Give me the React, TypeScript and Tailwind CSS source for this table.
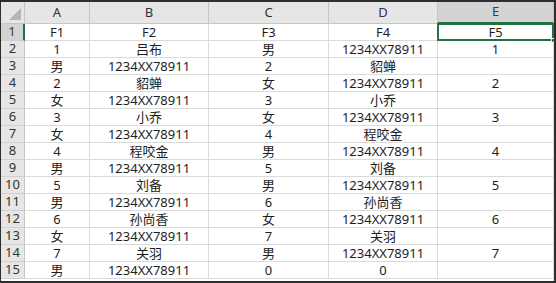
const COLS = ["A", "B", "C", "D", "E"];

const ROWS: string[][] = [
  ["F1", "F2", "F3", "F4", "F5"],
  ["1", "吕布", "男", "1234XX78911", "1"],
  ["男", "1234XX78911", "2", "貂蝉", ""],
  ["2", "貂蝉", "女", "1234XX78911", "2"],
  ["女", "1234XX78911", "3", "小乔", ""],
  ["3", "小乔", "女", "1234XX78911", "3"],
  ["女", "1234XX78911", "4", "程咬金", ""],
  ["4", "程咬金", "男", "1234XX78911", "4"],
  ["男", "1234XX78911", "5", "刘备", ""],
  ["5", "刘备", "男", "1234XX78911", "5"],
  ["男", "1234XX78911", "6", "孙尚香", ""],
  ["6", "孙尚香", "女", "1234XX78911", "6"],
  ["女", "1234XX78911", "7", "关羽", ""],
  ["7", "关羽", "男", "1234XX78911", "7"],
  ["男", "1234XX78911", "0", "0", ""],
];

export default function App() {
  return (
    <div
      className="w-[556px] h-[283px] bg-white border-t-2 border-l border-r-2 border-b-2 border-[#2e2e2e] overflow-hidden text-[13px] text-[#1e1e1e]"
      style={{ fontFamily: '"Noto Sans", "Noto Sans CJK SC", sans-serif' }}
    >
      <div className="grid grid-cols-[24px_65px_119px_120px_109px_116px] grid-rows-[22px_repeat(15,17px)]">
        {/* corner */}
        <div className="relative bg-[#e6e6e6] border-r border-b border-[#c6c6c6]">
          <div className="absolute right-[3px] bottom-[3px] w-0 h-0 border-l-[12px] border-l-transparent border-b-[12px] border-b-[#b5b5b5]" />
        </div>
        {COLS.map((c) => (
          <div
            key={c}
            className={`flex items-end justify-center pb-[1px] border-r border-[#c6c6c6] ${
              c === "E"
                ? "bg-[#d3d3d3] border-b-2 border-b-[#217346] text-[#3b3b3b]"
                : "bg-[#e6e6e6] border-b text-[#333]"
            }`}
          >
            {c}
          </div>
        ))}

        {ROWS.map((row, i) => (
          <Row key={i} index={i + 1} cells={row} />
        ))}
      </div>
    </div>
  );
}

function Row({ index, cells }: { index: number; cells: string[] }) {
  const selected = index === 1;
  return (
    <>
      <div
        className={`flex items-center justify-center border-b border-[#d0d0d0] ${
          selected
            ? "bg-[#d3d3d3] border-r-2 border-r-[#217346] text-[#3b3b3b]"
            : "bg-[#e6e6e6] border-r border-r-[#c6c6c6] text-[#333]"
        }`}
      >
        {index}
      </div>
      {cells.map((v, j) => (
        <div
          key={j}
          className="relative flex items-center justify-center leading-none border-r border-b border-[#dadada] whitespace-nowrap"
        >
          {v}
          {selected && j === 4 && (
            <>
              <div className="absolute -left-px -top-px -right-px -bottom-px border-2 border-[#217346]" />
              <div className="absolute -right-[3px] -bottom-[3px] w-[5px] h-[5px] bg-[#217346] border border-white" />
            </>
          )}
        </div>
      ))}
    </>
  );
}
